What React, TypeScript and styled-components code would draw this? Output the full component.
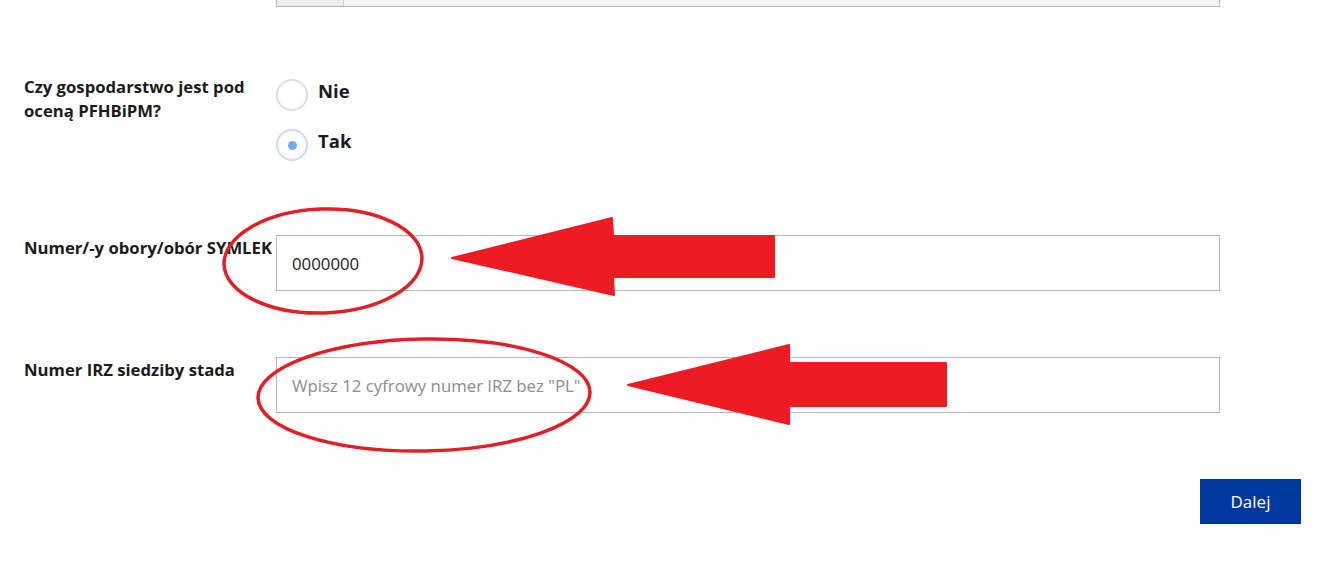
import styled, { createGlobalStyle } from 'styled-components';

const GlobalStyle = createGlobalStyle`
  html, body {
    margin: 0;
    padding: 0;
    background: #fff;
    overflow: hidden;
  }
  body {
    font-family: 'Open Sans', 'Liberation Sans', sans-serif;
    color: #1b1b1b;
  }
`;

const Page = styled.div`
  position: relative;
  width: 1330px;
  height: 561px;
  padding: 0 29px 0 24px;
  box-sizing: border-box;
  overflow: hidden;
`;

const Row = styled.div<{ $gap: number }>`
  display: grid;
  grid-template-columns: 252px 944px;
  margin-top: ${({ $gap }) => $gap}px;
`;

const Label = styled.label`
  font-size: 16.7px;
  font-weight: 700;
  line-height: 24px;
  padding-top: 1px;
  white-space: nowrap;
  overflow: visible;
`;

const WrapLabel = styled(Label)`
  white-space: normal;
  padding-top: 0;
  padding-right: 4px;
`;

// zablokowane pole z dodatkiem po lewej (widoczny tylko dół)
const AddonGroup = styled.div`
  display: flex;
  height: 56px;
  border: 1px solid #b4b4b4;
  box-sizing: border-box;
`;

const Addon = styled.div`
  width: 66px;
  background: #ececec;
  border-right: 1px solid #cfcfcf;
`;

const DisabledField = styled.div`
  flex: 1;
  background: #f5f5f5;
`;

const RadioGroup = styled.div`
  display: flex;
  flex-direction: column;
  gap: 18px;
  padding-top: 4px;
`;

const RadioOption = styled.label`
  display: flex;
  align-items: flex-start;
  gap: 10px;
  font-size: 18.5px;
  font-weight: 700;
  line-height: 24px;
  color: #1b1b1b;
`;

const RadioCircle = styled.span<{ $checked?: boolean }>`
  flex: none;
  width: 32px;
  height: 32px;
  border-radius: 50%;
  box-sizing: border-box;
  border: 2px solid ${({ $checked }) => ($checked ? '#c4def5' : '#dedede')};
  display: flex;
  align-items: center;
  justify-content: center;

  &::after {
    content: '';
    width: 9px;
    height: 9px;
    border-radius: 50%;
    background: #6eb0ec;
    display: ${({ $checked }) => ($checked ? 'block' : 'none')};
  }
`;

const TextInput = styled.input`
  height: 56px;
  box-sizing: border-box;
  border: 1px solid #b4b8bc;
  padding: 0 15px;
  font-family: 'Open Sans', 'Liberation Sans', sans-serif;
  font-size: 16.8px;
  color: #222;
  outline: none;
  background: #fff;

  &::placeholder {
    color: #8c8c8c;
  }
`;

const Actions = styled.div`
  display: flex;
  justify-content: flex-end;
  margin-top: 66px;
`;

const NextButton = styled.button`
  width: 101px;
  height: 45px;
  border: none;
  background: #0037a1;
  color: #fff;
  font-family: 'Open Sans', 'Liberation Sans', sans-serif;
  font-size: 17px;
  cursor: pointer;
`;

const Annotations = styled.svg`
  position: absolute;
  top: 0;
  left: 0;
  width: 1330px;
  height: 561px;
  pointer-events: none;
`;

const RED = '#ed1c24';

export default function App() {
  return (
    <>
      <GlobalStyle />
      <Page>
        <Row $gap={-49}>
          <span />
          <AddonGroup>
            <Addon />
            <DisabledField />
          </AddonGroup>
        </Row>

        <Row $gap={68}>
          <WrapLabel>Czy gospodarstwo jest pod oceną PFHBiPM?</WrapLabel>
          <RadioGroup>
            <RadioOption>
              <RadioCircle />
              Nie
            </RadioOption>
            <RadioOption>
              <RadioCircle $checked />
              Tak
            </RadioOption>
          </RadioGroup>
        </Row>

        <Row $gap={74}>
          <Label>Numer/-y obory/obór SYMLEK</Label>
          <TextInput defaultValue="0000000" />
        </Row>

        <Row $gap={66}>
          <Label>Numer IRZ siedziby stada</Label>
          <TextInput placeholder='Wpisz 12 cyfrowy numer IRZ bez "PL"' />
        </Row>

        <Actions>
          <NextButton>Dalej</NextButton>
        </Actions>

        <Annotations viewBox="0 0 1330 561">
          <ellipse
            cx="323"
            cy="261"
            rx="99"
            ry="52"
            fill="none"
            stroke="#e11f27"
            strokeWidth="3.5"
            transform="rotate(-2 323 261)"
          />
          <ellipse
            cx="424"
            cy="395"
            rx="166"
            ry="56"
            fill="none"
            stroke="#e11f27"
            strokeWidth="3.5"
            transform="rotate(-1 424 395)"
          />
          <path
            d="M452 258 L612 218 L613 236 L774 236 L774 277 L613 277 L614 295 Z"
            fill={RED}
            stroke={RED}
            strokeWidth="2"
            strokeLinejoin="round"
          />
          <path
            d="M628 385 L789 345 L789 363 L946 363 L946 406 L789 406 L789 424 Z"
            fill={RED}
            stroke={RED}
            strokeWidth="2"
            strokeLinejoin="round"
          />
        </Annotations>
      </Page>
    </>
  );
}
